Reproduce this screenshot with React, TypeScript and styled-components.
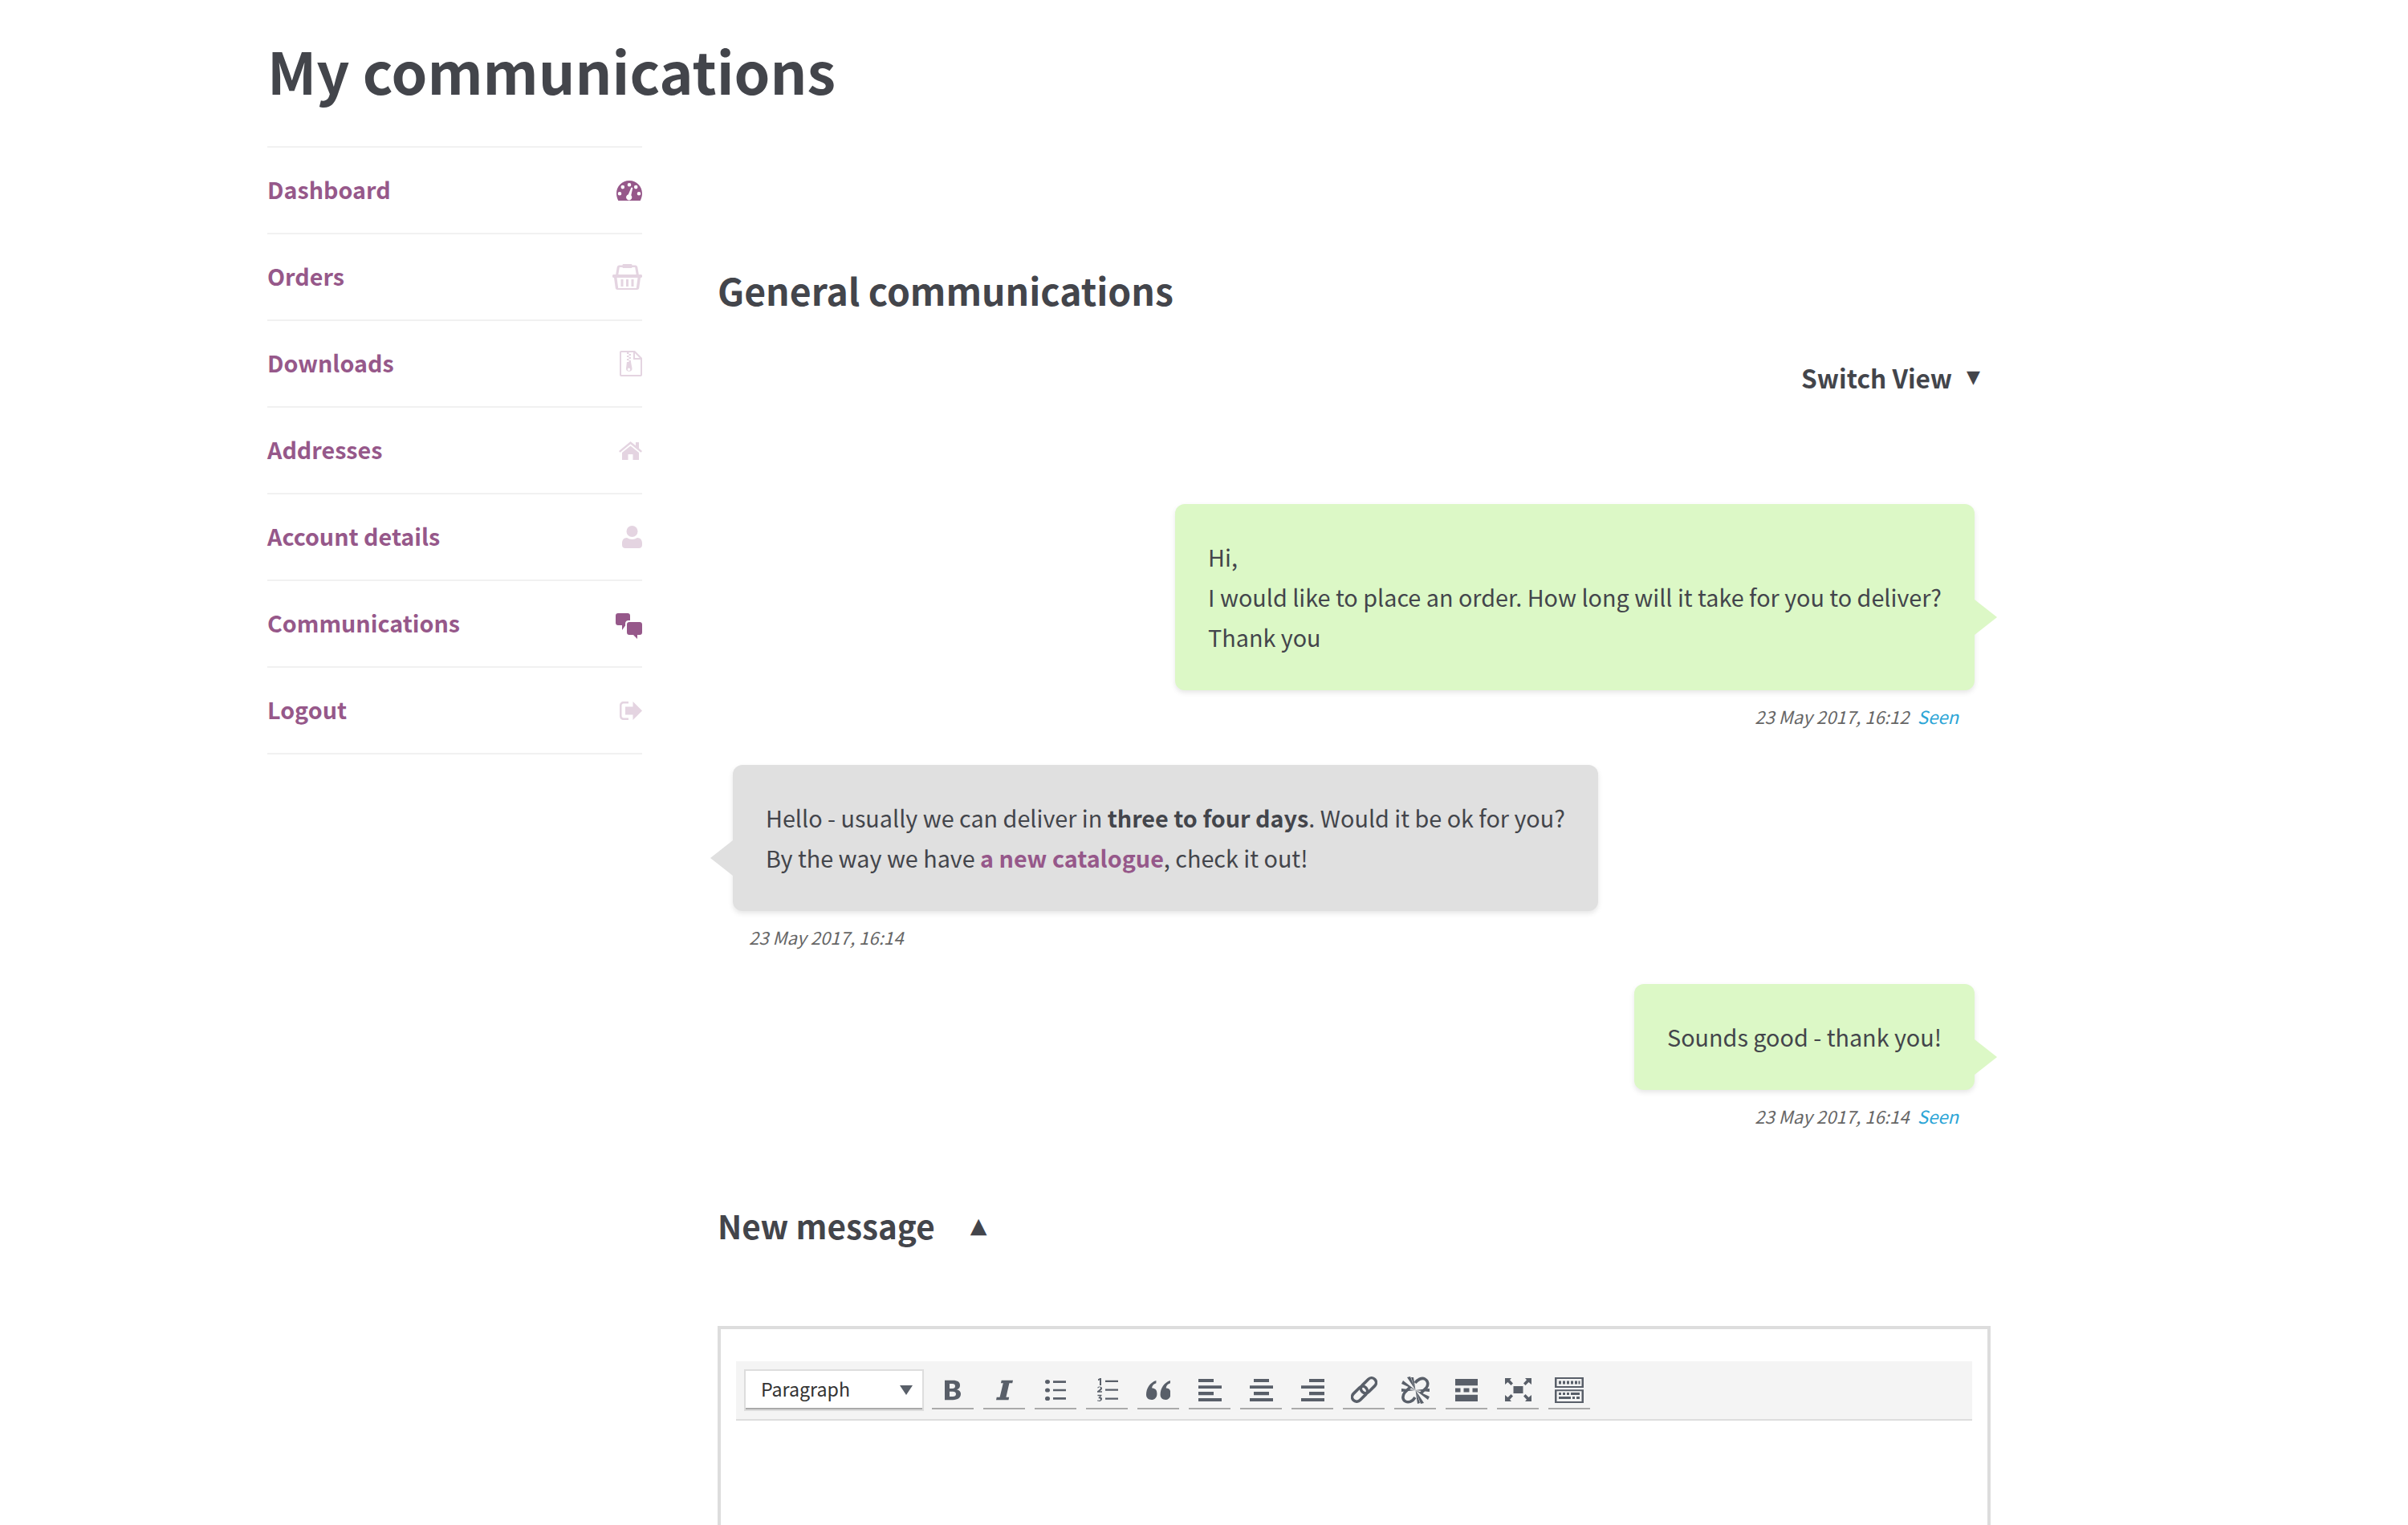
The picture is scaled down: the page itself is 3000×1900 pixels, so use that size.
import React from 'react';
import styled, { createGlobalStyle } from 'styled-components';

const colors = {
  text: '#43454b',
  purple: '#96588a',
  line: '#f1f1f1',
  green: '#dcf8c6',
  gray: '#e0e0e0',
  meta: '#666666',
  seen: '#2ca5d6',
  icon: '#595f69',
};

const GlobalStyle = createGlobalStyle`
  html, body {
    margin: 0;
    height: 100%;
    overflow: hidden;
    background: #ffffff;
  }
  body {
    font-family: "Noto Sans CJK SC", "Noto Sans", sans-serif;
    color: ${colors.text};
  }
`;

const Page = styled.div`
  height: 1900px;
  width: 3000px;
  padding: 0 520px 0 333px;
  box-sizing: border-box;
  overflow: hidden;
`;

const PageTitle = styled.h1`
  margin: 0;
  height: 182px;
  padding-top: 37px;
  box-sizing: border-box;
  font-size: 71.8px;
  line-height: 100px;
  font-weight: 700;
`;

const Columns = styled.div`
  display: grid;
  grid-template-columns: 467px 1586px;
  column-gap: 94px;
`;

const SideNav = styled.nav`
  border-top: 2px solid ${colors.line};
  align-self: start;
`;

const NavRow = styled.a`
  display: flex;
  align-items: center;
  justify-content: space-between;
  height: 106px;
  border-bottom: 2px solid ${colors.line};
  color: ${colors.purple};
  font-size: 28.7px;
  font-weight: 700;
  line-height: 40px;
`;

const NavLabel = styled.span`
  padding-bottom: 3px;
`;

const NavIcon = styled.svg<{ $active?: boolean; $nudge?: number }>`
  display: block;
  fill: ${colors.purple};
  opacity: ${(p) => (p.$active ? 1 : 0.25)};
  margin-top: ${(p) => p.$nudge ?? 0}px;
`;

const Main = styled.main`
  padding-top: 148px;
`;

const SectionTitle = styled.h2`
  margin: 0;
  font-size: 46.3px;
  line-height: 62px;
  font-weight: 700;
`;

const SwitchRow = styled.div`
  display: flex;
  justify-content: flex-end;
  align-items: center;
  gap: 18px;
  margin-top: 55px;
  padding-right: 13px;
  font-size: 31.6px;
  line-height: 46px;
  font-weight: 700;
`;

const Caret = styled.span<{ $size: number }>`
  font-size: ${(p) => p.$size}px;
  font-family: "DejaVu Sans", sans-serif;
`;

const Thread = styled.div`
  margin-top: 135px;
  padding: 0 20px 0 19px;
  display: flex;
  flex-direction: column;
`;

const MessageBlock = styled.div<{ $mine?: boolean; $gap: number }>`
  display: flex;
  flex-direction: column;
  align-items: ${(p) => (p.$mine ? 'flex-end' : 'flex-start')};
  margin-bottom: ${(p) => p.$gap}px;
`;

const Bubble = styled.div<{ $mine?: boolean }>`
  position: relative;
  padding: 41px;
  border-radius: 12px;
  background: ${(p) => (p.$mine ? colors.green : colors.gray)};
  box-shadow: 0 3px 6px rgba(0, 0, 0, 0.1);
  font-size: 28.75px;
  line-height: 50px;
  white-space: nowrap;
  &::after {
    content: '';
    position: absolute;
    top: calc(50% + 3px);
    ${(p) => (p.$mine ? 'left: 100%;' : 'right: 100%;')}
    border-style: solid;
    border-width: 22px ${(p) => (p.$mine ? '0 22px 28px' : '28px 22px 0')};
    border-color: transparent ${(p) => (p.$mine ? `transparent transparent ${colors.green}` : `${colors.gray} transparent transparent`)};
  }
`;

const Strong = styled.b`
  font-weight: 700;
`;

const InlineLink = styled.a`
  font-weight: 700;
  color: ${colors.purple};
`;

const Meta = styled.div`
  margin-top: 16px;
  padding: 0 20px;
  font-size: 22.2px;
  line-height: 32px;
  font-style: italic;
  color: ${colors.meta};
`;

const Seen = styled.span`
  margin-left: 10px;
  color: ${colors.seen};
`;

const NewMessageRow = styled.div`
  display: flex;
  align-items: center;
  gap: 44px;
  margin-top: 91px;
  font-size: 40.4px;
  line-height: 60px;
  font-weight: 700;
`;

const Editor = styled.div`
  margin-top: 95px;
  height: 500px;
  border: 4px solid #dddddd;
  padding: 40px 19px 0;
`;

const Toolbar = styled.div`
  display: flex;
  height: 74px;
  padding: 10px 10px 0;
  box-sizing: border-box;
  background: #f4f4f4;
  border-bottom: 2px solid #dddddd;
`;

const FormatSelect = styled.div`
  width: 224px;
  height: 52px;
  box-sizing: border-box;
  display: flex;
  align-items: center;
  justify-content: space-between;
  padding: 0 12px 4px 19px;
  margin-right: 10px;
  background: #ffffff;
  border: 2px solid #dddddd;
  box-shadow: inset 0 -2px 0 #aaaaaa;
  font-size: 23.2px;
  line-height: 34px;
  color: #333333;
`;

const SelectArrow = styled.span`
  width: 0;
  height: 0;
  margin-top: 4px;
  border-style: solid;
  border-width: 12px 8px 0;
  border-color: ${colors.icon} transparent transparent;
`;

const ToolButton = styled.div`
  width: 52px;
  height: 50px;
  margin-right: 12px;
  padding-top: 3px;
  box-sizing: border-box;
  border-bottom: 2px solid #aaaaaa;
  display: flex;
  align-items: center;
  justify-content: center;
  svg {
    display: block;
    fill: ${colors.icon};
  }
`;

const navItems: { label: string; active?: boolean; nudge?: number; w: number; h: number; path: React.ReactNode }[] = [
  {
    label: 'Dashboard',
    active: true,
    w: 32,
    h: 25,
    path: (
      <path
        fillRule="evenodd"
        d="M16 0C7 0 0 7 0 16c0 3 .8 6.200 2.300 9h27.400C31.200 22.200 32 19 32 16 32 7 25 0 16 0zM16 3a2.300 2.300 0 1 1 0 4.600A2.300 2.300 0 0 1 16 3zM7.800 5.800a2.300 2.300 0 1 1 0 4.600 2.300 2.300 0 0 1 0-4.600zM24.200 5.800a2.300 2.300 0 1 1 0 4.600 2.300 2.300 0 0 1 0-4.600zM4 14a2.300 2.300 0 1 1 0 4.600A2.300 2.300 0 0 1 4 14zM28 14a2.300 2.300 0 1 1 0 4.600 2.300 2.300 0 0 1 0-4.600zM18.500 8.500l1.800.6-2 9.200a3.600 3.600 0 1 1-3.500-1z"
      />
    ),
  },
  {
    label: 'Orders',
    w: 37,
    h: 33,
    path: (
      <path
        fillRule="evenodd"
        d="M14 0h9c1 0 1.500.5 1.500 1.500h4c1.500 0 2.500 1 2.800 2.500l1.500 9h2.700c.8 0 1.500.7 1.500 1.500v1c0 .8-.7 1.500-1.500 1.500H35l-1.800 13c-.2 1.300-1.200 2-2.500 2H6.300c-1.300 0-2.300-.7-2.500-2L2 17H1.500C.7 17 0 16.300 0 15.500v-1C0 13.700.7 13 1.500 13h2.700l1.500-9C6 2.500 7 1.500 8.500 1.500h4C12.500.5 13 0 14 0zM8.800 4 7.300 13h22.400l-1.500-9h-3.700c0 .7-.5 1-1.500 1H14c-1 0-1.500-.3-1.500-1zM5.500 17l1.700 13h22.600l1.700-13zM10.500 19h3v9h-3zM17 19h3v9h-3zM23.500 19h3v9h-3z"
      />
    ),
  },
  {
    label: 'Downloads',
    w: 28,
    h: 32,
    path: (
      <path
        fillRule="evenodd"
        d="M2 0h17l9 9v21c0 1.200-.8 2-2 2H2c-1.200 0-2-.8-2-2V2C0 .8.800 0 2 0zM2 2v28h24V11h-9V2zM19 3v6h6zM9 2h2.500v2H9zM11.500 4H14v2h-2.500zM9 6h2.500v2H9zM11.500 8H14v2h-2.500zM9 10h2.500v2H9zM11.500 12H14v2h-2.500zM9 14h5l1.500 8a3.500 3.500 0 1 1-7.500 0zM11.500 21.500a1.700 1.700 0 1 0 0 3.400 1.700 1.700 0 0 0 0-3.400z"
      />
    ),
  },
  {
    label: 'Addresses',
    w: 29,
    h: 23,
    path: (
      <path d="M14.500 0 21 5.300V1h4v7.500L29 12l-1.500 1.800L14.500 3.300 1.500 13.800 0 12zM14.500 5.500 25 14v9h-7.500v-7h-6v7H4v-9z" />
    ),
  },
  {
    label: 'Account details',
    w: 25,
    h: 28,
    path: (
      <path d="M12.500 0a7 7 0 1 1 0 14 7 7 0 0 1 0-14zM6 15c2 1.300 4 2 6.500 2s4.500-.7 6.500-2c3.600 0 6 2.800 6 6.500V24c0 2.400-1.600 4-4 4H4c-2.400 0-4-1.600-4-4v-2.500C0 17.800 2.400 15 6 15z" />
    ),
  },
  {
    label: 'Communications',
    active: true,
    nudge: 6,
    w: 33,
    h: 32,
    path: (
      <path d="M3 0h12c1.800 0 3 1.200 3 3v6h-2c-2.400 0-4 1.600-4 4v2.500L8 21v-6H3c-1.800 0-3-1.200-3-3V3C0 1.200 1.200 0 3 0zM17 11h13c1.800 0 3 1.200 3 3v10c0 1.800-1.200 3-3 3h-3v5l-5-5h-5c-1.800 0-3-1.200-3-3V14c0-1.800 1.200-3 3-3z" />
    ),
  },
  {
    label: 'Logout',
    w: 28,
    h: 23,
    path: (
      <path
        fillRule="evenodd"
        d="M5 0h6v2.500H5C3.500 2.500 2.500 3.500 2.500 5v13c0 1.500 1 2.500 2.500 2.500h6V23H5c-3 0-5-2-5-5V5c0-3 2-5 5-5zM16.500 0 28 11.500 16.500 23v-6.500H7v-10h9.500z"
      />
    ),
  },
];

// w/h is the drawn size, vw/vh the path's own box
const toolIcons: { w: number; h: number; vw: number; vh: number; path: React.ReactNode }[] = [
  { w: 20, h: 26, vw: 20, vh: 31, path: <path fillRule="evenodd" d="M0 1h10c6 0 9 2.500 9 7.500 0 3-1.500 5-4 6 3.200.8 5 3 5 6.500C20 27 16.500 30 10 30H0zM6 6v7h3.500c2.300 0 3.500-1.200 3.500-3.500S11.800 6 9.500 6zM6 17.500V25h4c2.500 0 4-1.300 4-3.800s-1.500-3.700-4-3.700z" /> },
  { w: 21, h: 26, vw: 22, vh: 31, path: <path d="M7 1h15l-.8 4h-4L13 26h4l-.8 4H0l.8-4h4L9.200 5h-3z" /> },
  { w: 26, h: 26, vw: 26, vh: 30, path: <path d="M3 0a3 3 0 1 1 0 6 3 3 0 0 1 0-6zM10 1.500h16v3H10zM3 12a3 3 0 1 1 0 6 3 3 0 0 1 0-6zM10 13.500h16v3H10zM3 24a3 3 0 1 1 0 6 3 3 0 0 1 0-6zM10 25.500h16v3H10z" /> },
  { w: 27, h: 29, vw: 27, vh: 32, path: <path d="M2 1.500 4.500 0H6v10H4V2.500L2 3.500zM11 3h16v2.500H11zM1 13.500c.5-1.500 1.500-2 3-2s3 .8 3 2.500c0 1.500-1 2.500-3 4H7v1.500H1v-1.500c2-2 4-3 4-4.300 0-.7-.5-1.200-1.200-1.200-.6 0-1 .4-1.300 1zM11 15h16v2.500H11zM1.500 23h5v1.200L4.500 26c1.600.1 2.500 1 2.500 2.500C7 30.500 5.500 32 3.500 32 2.500 32 1.500 31.700 1 31l.8-1c.5.400 1 .7 1.700.7.900 0 1.500-.6 1.500-1.400 0-.9-.8-1.400-2.500-1.400v-1l2-2.400H1.500zM11 27h16v2.500H11z" /> },
  { w: 30, h: 24, vw: 29, vh: 30, path: <path d="M12 0v4C8 6 7 9 7 12c3.500 0 6 2.500 6 8.500S10 30 6.500 30C2.500 30 0 27 0 22 0 12 4.500 3 12 0zM29 0v4c-4 2-5 5-5 8 3.500 0 5.500 2.500 5.500 8.500S27 30 23.500 30c-4 0-6.500-3-6.500-8C17 12 21.500 3 29 0z" /> },
  { w: 29, h: 28, vw: 29, vh: 34, path: <path d="M0 0h19v5H0zM0 10h29v4.500H0zM0 19.500h19v5H0zM0 29h29v5H0z" /> },
  { w: 29, h: 28, vw: 29, vh: 34, path: <path d="M5 0h19v5H5zM0 10h29v4.500H0zM5 19.500h19v5H5zM0 29h29v5H0z" /> },
  { w: 29, h: 28, vw: 29, vh: 34, path: <path d="M10 0h19v5H10zM0 10h29v4.500H0zM10 19.500h19v5H10zM0 29h29v5H0z" /> },
  {
    w: 33,
    h: 33,
    vw: 33,
    vh: 33,
    path: (
      <g fill="none" stroke={colors.icon} strokeWidth="3.6">
        <rect x="11" y="5.500" width="22" height="11.500" rx="5.750" transform="rotate(-45 22 11.250)" />
        <rect x="0" y="16" width="22" height="11.500" rx="5.750" transform="rotate(-45 11 21.750)" />
      </g>
    ),
  },
  {
    w: 35,
    h: 34,
    vw: 35,
    vh: 34,
    path: (
      <g>
        <path fill="none" stroke={colors.icon} strokeWidth="3.6" d="M17 8c3-4 8-7 12-5 4 2 5 7 2 11l-7 7M11 13l-7 7c-3 4-3 9 1 11 4 2 9 0 12-5" />
        <path d="M17.500 17 7 1l4-1zM17.500 17 0 9l2-4zM17.500 17 0 15v4zM17.500 17 12 1l3 0zM17.500 17 28 33l-4 1zM17.500 17 35 25l-2 4zM17.500 17 35 19v-4zM17.500 17 23 33l-3 1z" />
      </g>
    ),
  },
  { w: 28, h: 28, vw: 28, vh: 34, path: <path d="M0 0h28v10H0zM0 14h6.500v6H0zM10.500 14h7v6h-7zM21.500 14H28v6h-6.500zM0 24h28v10H0z" /> },
  { w: 33, h: 29, vw: 33, vh: 29, path: <path d="M10.500 10h12v9h-12zM0 0h8l-2 2.200L10 6.500 7.500 9 3.500 5 0 8zM33 0v8l-3.500-3-4 4L23 6.500l4-4.300-2-2.200zM0 29v-8l3.500 3 4-4 2.500 2.500-4 4.300 2 2.200zM33 29h-8l2-2.200-4-4.300 2.500-2.500 4 4 3.500-3z" /> },
  { w: 36, h: 32, vw: 36, vh: 42, path: <path fillRule="evenodd" d="M0 0h36v17H0zM2.500 2.500v12h31v-12zM5 6h3v5H5zM10 6h3v5h-3zM15 6h3v5h-3zM20 6h3v5h-3zM25 6h3v5h-3zM29.500 6h2v5h-2zM0 20h36v22H0zM2.500 22.500V39.500h31V22.500zM5 25h3v4H5zM10 25h3v4h-3zM15 25h3v4h-3zM20 25h11v4H20zM5 31.500h15v4H5zM22 31.500h3v4h-3zM27 31.500h4v4h-4z" /> },
];

/**
 * My communications page
 * @return {JSX.Element}
 */
function App() {
  return (
    <>
      <GlobalStyle />
      <Page>
        <PageTitle>My communications</PageTitle>
        <Columns>
          <SideNav>
            {navItems.map((item) => (
              <NavRow key={item.label}>
                <NavLabel>{item.label}</NavLabel>
                <NavIcon $active={item.active} $nudge={item.nudge} width={item.w} height={item.h} viewBox={`0 0 ${item.w} ${item.h}`}>
                  {item.path}
                </NavIcon>
              </NavRow>
            ))}
          </SideNav>
          <Main>
            <SectionTitle>General communications</SectionTitle>
            <SwitchRow>
              Switch View <Caret $size={22}>▼</Caret>
            </SwitchRow>
            <Thread>
              <MessageBlock $mine $gap={45}>
                <Bubble $mine>
                  Hi,
                  <br />
                  I would like to place an order. How long will it take for you to deliver?
                  <br />
                  Thank you
                </Bubble>
                <Meta>
                  23 May 2017, 16:12<Seen>Seen</Seen>
                </Meta>
              </MessageBlock>
              <MessageBlock $gap={43}>
                <Bubble>
                  Hello - usually we can deliver in <Strong>three to four days</Strong>. Would it be ok for you?
                  <br />
                  By the way we have <InlineLink>a new catalogue</InlineLink>, check it out!
                </Bubble>
                <Meta>23 May 2017, 16:14</Meta>
              </MessageBlock>
              <MessageBlock $mine $gap={0}>
                <Bubble $mine>Sounds good - thank you!</Bubble>
                <Meta>
                  23 May 2017, 16:14<Seen>Seen</Seen>
                </Meta>
              </MessageBlock>
            </Thread>
            <NewMessageRow>
              New message <Caret $size={27}>▲</Caret>
            </NewMessageRow>
            <Editor>
              <Toolbar>
                <FormatSelect>
                  Paragraph
                  <SelectArrow />
                </FormatSelect>
                {toolIcons.map((icon, i) => (
                  <ToolButton key={i}>
                    <svg width={icon.w} height={icon.h} viewBox={`0 0 ${icon.vw} ${icon.vh}`} preserveAspectRatio="none">
                      {icon.path}
                    </svg>
                  </ToolButton>
                ))}
              </Toolbar>
            </Editor>
          </Main>
        </Columns>
      </Page>
    </>
  );
}

export default App;
